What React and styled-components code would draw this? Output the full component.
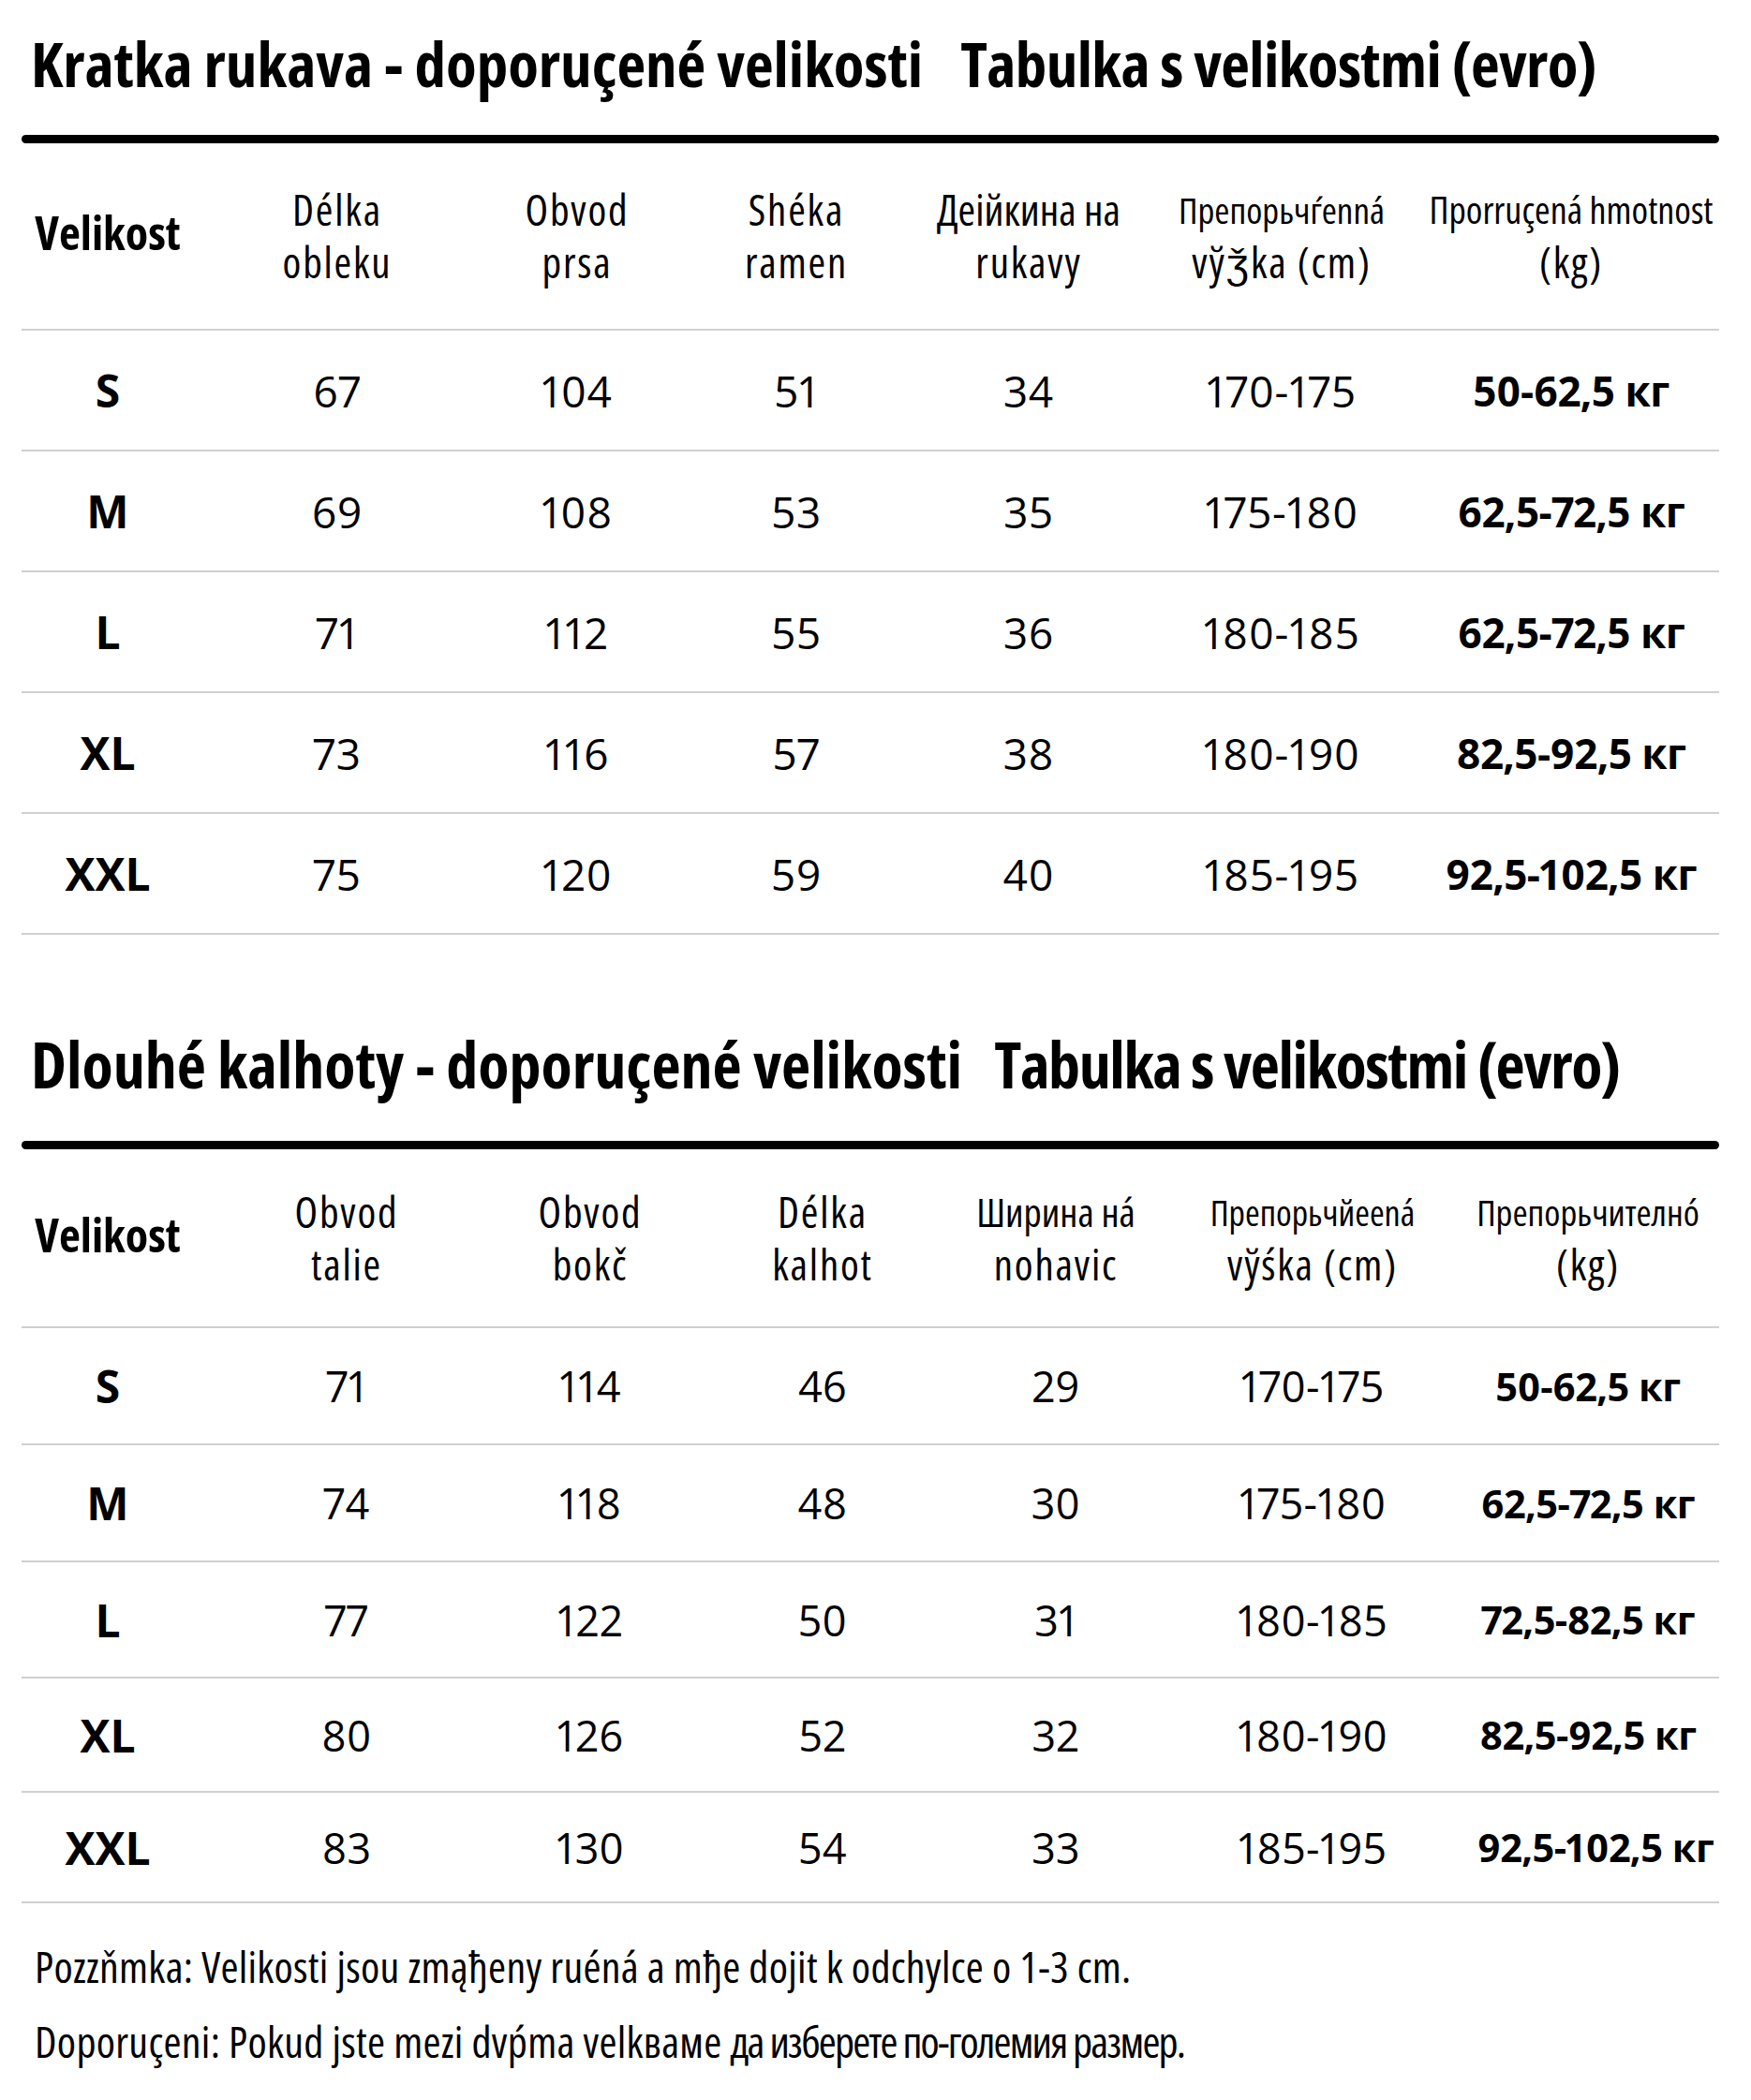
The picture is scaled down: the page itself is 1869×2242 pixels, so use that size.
import React from 'react';
import styled, { createGlobalStyle } from 'styled-components';

const GlobalStyle = createGlobalStyle`
  body {
    margin: 0;
    background: #fff;
    color: #000;
    font-family: "Open Sans", "Roboto", sans-serif;
    font-stretch: 75%;
  }
`;

// header lines: [text, narrow?, size]
const SHIRTS = {
  title: 'Kratka rukava - doporuçené velikosti',
  subtitle: 'Tabulka s velikostmi (evro)',
  titleSize: 67,
  titleGap: 40,
  subSpacing: -0.6,
  ruleGap: 43,
  cols: [184, 306, 206, 262, 234, 306, 312],
  headHeight: 198,
  rowHeights: [127, 127, 127, 127, 127],
  valueSize: 46,
  valueSpacing: 0.8,
  weightSize: 44,
  headers: [
    [['Délka'], ['obleku']],
    [['Obvod'], ['prsa']],
    [['Shéka'], ['ramen']],
    [['Деійкина на', true, 45], ['rukavy']],
    [['Препорьчѓеnná', true, 39], ['vўǯka (cm)']],
    [['Пporruçená hmotnost', true, 40], ['(kg)']],
  ],
  rows: [
    ['S', '67', '104', '51', '34', '170-175', '50-62,5 кг'],
    ['M', '69', '108', '53', '35', '175-180', '62,5-72,5 кг'],
    ['L', '71', '112', '55', '36', '180-185', '62,5-72,5 кг'],
    ['XL', '73', '116', '57', '38', '180-190', '82,5-92,5 кг'],
    ['XXL', '75', '120', '59', '40', '185-195', '92,5-102,5 кг'],
  ],
};

const PANTS = {
  title: 'Dlouhé kalhoty - doporuçené velikosti',
  subtitle: 'Tabulka s velikostmi (evro)',
  titleSize: 68,
  titleGap: 34,
  subSpacing: -1.4,
  ruleGap: 48,
  cols: [184, 326, 194, 302, 196, 352, 236],
  headHeight: 189,
  rowHeights: [123, 123, 122, 120, 116],
  valueSize: 45,
  valueSpacing: 0.3,
  weightSize: 41.5,
  headers: [
    [['Obvod'], ['talie']],
    [['Obvod'], ['bokč']],
    [['Délka'], ['kalhot']],
    [['Ширина нá', true, 42], ['nohavic']],
    [['Препорьчйееná', true, 38], ['vўśka (cm)']],
    [['Препорьчителнó', true, 39], ['(kg)']],
  ],
  rows: [
    ['S', '71', '114', '46', '29', '170-175', '50-62,5 кг'],
    ['M', '74', '118', '48', '30', '175-180', '62,5-72,5 кг'],
    ['L', '77', '122', '50', '31', '180-185', '72,5-82,5 кг'],
    ['XL', '80', '126', '52', '32', '180-190', '82,5-92,5 кг'],
    ['XXL', '83', '130', '54', '33', '185-195', '92,5-102,5 кг'],
  ],
};

export default function App() {
  return (
    <Page>
      <GlobalStyle />
      <SizeTable data={SHIRTS} />
      <SizeTable data={PANTS} $second />
      <Notes>
        <p>Pozzňmka: Velikosti jsou zmąђeny ruéná a mђe dojit k odchylce o 1-3 cm.</p>
        <p>
          Doporuçeni: Pokud jste mezi dvṕma velkваме <Cyr>да изберете по-големия размер.</Cyr>
        </p>
      </Notes>
    </Page>
  );
}

function SizeTable({ data, $second }) {
  const template = data.cols.map((c) => c + 'px').join(' ');
  return (
    <Section $second={$second}>
      <Title $gap={data.titleGap} $size={data.titleSize}>
        <span>{data.title}</span>
        <Sub $spacing={data.subSpacing}>{data.subtitle}</Sub>
      </Title>
      <ThickRule $gap={data.ruleGap} />
      <Row $cols={template} $height={data.headHeight}>
        <SizeHead>Velikost</SizeHead>
        {data.headers.map((h, i) => (
          <HeadCell key={i}>
            {h.map(([text, narrow, size]) => (
              <HeadLine key={text} $narrow={narrow} $size={size}>
                {text}
              </HeadLine>
            ))}
          </HeadCell>
        ))}
      </Row>
      {data.rows.map((r, ri) => (
        <Row key={r[0]} $cols={template} $height={data.rowHeights[ri]}>
          <SizeCell>{r[0]}</SizeCell>
          {r.slice(1, -1).map((v, i) => (
            <Cell key={i} $size={data.valueSize} $spacing={data.valueSpacing}>
              {v}
            </Cell>
          ))}
          <WeightCell $size={data.weightSize}>{r[r.length - 1]}</WeightCell>
        </Row>
      ))}
    </Section>
  );
}

const Page = styled.div`
  width: 1812px;
  padding: 33px 0 0 23px;
`;

const Section = styled.section`
  margin-top: ${(p) => (p.$second ? '104px' : '0')};
`;

const Title = styled.h1`
  margin: 0 0 0 10px;
  display: flex;
  gap: ${(p) => p.$gap}px;
  font-size: ${(p) => p.$size}px;
  line-height: 68px;
  font-weight: 700;
  white-space: nowrap;
`;

const Sub = styled.span`
  letter-spacing: ${(p) => p.$spacing}px;
`;

const ThickRule = styled.div`
  margin-top: ${(p) => p.$gap}px;
  height: 9px;
  border-radius: 5px;
  background: #000;
`;

const Row = styled.div`
  display: grid;
  grid-template-columns: ${(p) => p.$cols};
  align-items: center;
  height: ${(p) => p.$height}px;
  border-bottom: 2px solid #d0d0d0;
`;

const HeadCell = styled.div`
  display: flex;
  flex-direction: column;
  align-items: center;
  white-space: nowrap;
`;

const HeadLine = styled.span`
  display: block;
  height: 56px;
  font-size: ${(p) => p.$size || 45}px;
  line-height: 56px;
  letter-spacing: ${(p) => (p.$narrow ? '0' : '1.8px')};
`;

const SizeHead = styled.div`
  text-align: center;
  font-size: 50px;
  font-weight: 700;
  padding-bottom: 8px;
`;

const SizeCell = styled.div`
  text-align: center;
  font-size: 48px;
  font-weight: 700;
  font-stretch: 100%;
`;

const Cell = styled.div`
  text-align: center;
  font-size: ${(p) => p.$size}px;
  font-stretch: 100%;
  font-variant-numeric: proportional-nums;
  letter-spacing: ${(p) => p.$spacing || 0}px;
  white-space: nowrap;
`;

const WeightCell = styled(Cell)`
  font-weight: 700;
  letter-spacing: -0.5px;
`;

const Notes = styled.div`
  margin-top: 27px;
  padding-left: 14px;

  p {
    margin: 0;
    font-size: 46px;
    line-height: 80px;
    letter-spacing: 0.3px;
    white-space: nowrap;
  }
`;

const Cyr = styled.span`
  letter-spacing: -1.8px;
`;
